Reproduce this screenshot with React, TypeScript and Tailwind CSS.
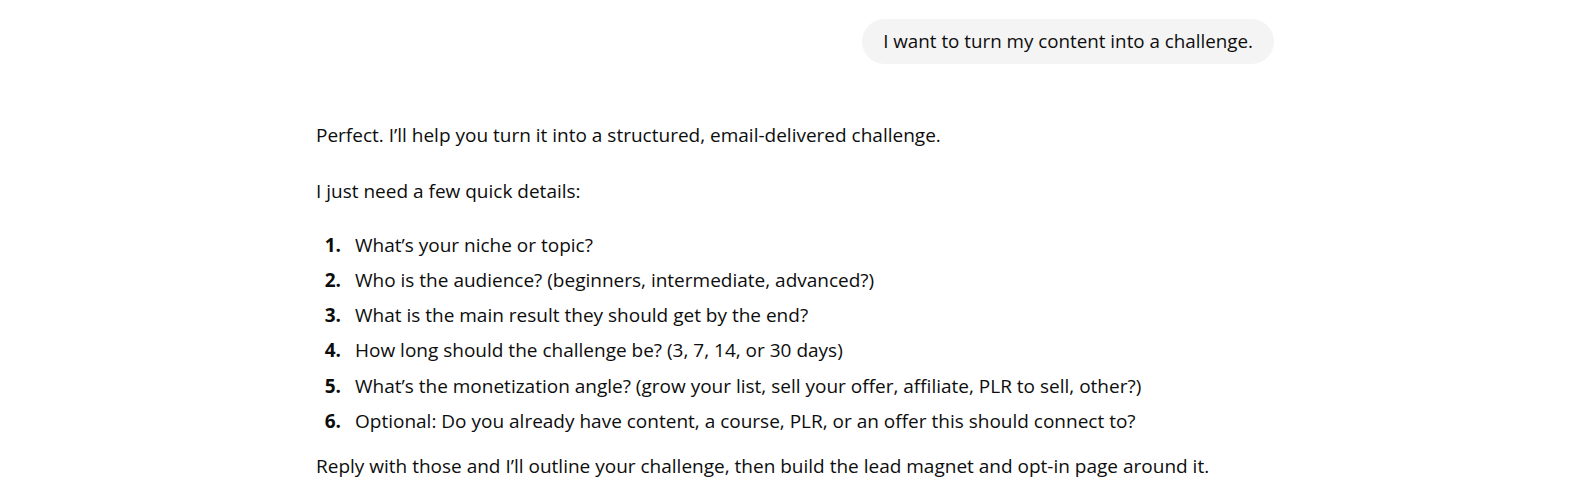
import React from "react";

const items = [
  "What’s your niche or topic?",
  "Who is the audience? (beginners, intermediate, advanced?)",
  "What is the main result they should get by the end?",
  "How long should the challenge be? (3, 7, 14, or 30 days)",
  "What’s the monetization angle? (grow your list, sell your offer, affiliate, PLR to sell, other?)",
  "Optional: Do you already have content, a course, PLR, or an offer this should connect to?",
];

export default function App() {
  return (
    <div className="h-[487px] w-full overflow-hidden bg-white font-['Open_Sans',sans-serif] text-[19px] text-[#0d0d0d]">
      <div className="flex justify-center pl-[12px] pt-[19px]">
        <div className="w-[958px]">
          <div className="flex justify-end">
            <div className="rounded-full bg-[#f4f4f4] pl-[21px] pr-[21px] pt-[9px] pb-[10px] text-[18.8px] leading-[26.4px]">
              I want to turn my content into a challenge.
            </div>
          </div>
          <div className="mt-[55.4px] leading-[30.8px]">
            <p>Perfect. I’ll help you turn it into a structured, email-delivered challenge.</p>
            <p className="mt-[25.5px]">I just need a few quick details:</p>
            <ol className="mt-[23px] flex flex-col gap-[4.4px]">
              {items.map((t, i) => (
                <li key={i} className="flex">
                  <span className="w-[39px] shrink-0 pr-[14px] text-right font-bold">{i + 1}.</span>
                  <span>{t}</span>
                </li>
              ))}
            </ol>
            <p className="mt-[14px]">
              Reply with those and I’ll outline your challenge, then build the lead magnet and opt-in page around it.
            </p>
          </div>
        </div>
      </div>
    </div>
  );
}
